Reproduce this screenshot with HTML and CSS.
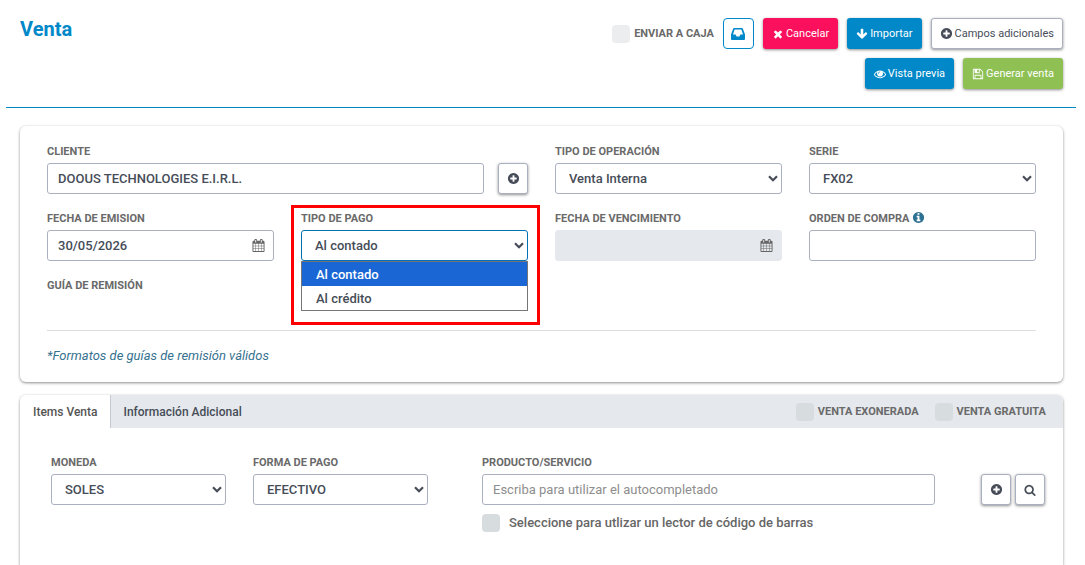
FILE: index.html
```html
<!DOCTYPE html>
<html lang="es">
<head>
<meta charset="utf-8">
<meta name="viewport" content="width=device-width, initial-scale=1">
<title>Venta</title>
<link rel="stylesheet" href="styles.css">
</head>
<body>
<svg class="sprite" aria-hidden="true">
  <symbol id="times" viewBox="0 0 1792 1792"><path d="M1490 1322q0 40-28 68l-136 136q-28 28-68 28t-68-28l-294-294-294 294q-28 28-68 28t-68-28l-136-136q-28-28-28-68t28-68l294-294-294-294q-28-28-28-68t28-68l136-136q28-28 68-28t68 28l294 294 294-294q28-28 68-28t68 28l136 136q28 28 28 68t-28 68l-294 294 294 294q28 28 28 68z"/></symbol>
  <symbol id="arrow-down" viewBox="0 0 1792 1792"><path d="M1675 832q0 53-37 90l-651 652q-39 37-91 37-53 0-90-37l-651-652q-38-36-38-90 0-53 38-91l74-75q39-37 91-37 53 0 90 37l294 294v-704q0-52 38-90t90-38h128q52 0 90 38t38 90v704l294-294q37-37 90-37 52 0 91 37l75 75q37 39 37 91z"/></symbol>
  <symbol id="plus-circle" viewBox="0 0 1792 1792"><path d="M1344 960v-128q0-26-19-45t-45-19h-256v-256q0-26-19-45t-45-19h-128q-26 0-45 19t-19 45v256h-256q-26 0-45 19t-19 45v128q0 26 19 45t45 19h256v256q0 26 19 45t45 19h128q26 0 45-19t19-45v-256h256q26 0 45-19t19-45zm320-64q0 209-103 385.5t-279.5 279.5-385.5 103-385.5-103-279.5-279.5-103-385.5 103-385.5 279.5-279.5 385.5-103 385.5 103 279.5 279.5 103 385.5z"/></symbol>
  <symbol id="info-circle" viewBox="0 0 1792 1792"><path d="M1152 1376v-160q0-14-9-23t-23-9h-96v-512q0-14-9-23t-23-9h-320q-14 0-23 9t-9 23v160q0 14 9 23t23 9h96v320h-96q-14 0-23 9t-9 23v160q0 14 9 23t23 9h448q14 0 23-9t9-23zm-128-896v-160q0-14-9-23t-23-9h-192q-14 0-23 9t-9 23v160q0 14 9 23t23 9h192q14 0 23-9t9-23zm640 416q0 209-103 385.5t-279.5 279.5-385.5 103-385.5-103-279.5-279.5-103-385.5 103-385.5 279.5-279.5 385.5-103 385.5 103 279.5 279.5 103 385.5z"/></symbol>
  <symbol id="eye" viewBox="0 0 1792 1792"><path d="M1664 960q-152-236-381-353 61 104 61 225 0 185-131.5 316.5t-316.5 131.5-316.5-131.5-131.5-316.5q0-121 61-225-229 117-381 353 133 205 333.5 326.5t434.5 121.5 434.5-121.5 333.5-326.5zm-720-384q0-20-14-34t-34-14q-125 0-214.5 89.5t-89.5 214.5q0 20 14 34t34 14 34-14 14-34q0-86 61-147t147-61q20 0 34-14t14-34zm848 384q0 34-20 69-140 230-376.5 368.5t-499.5 138.5-499.5-139-376.5-368q-20-35-20-69t20-69q140-229 376.5-368t499.5-139 499.5 139 376.5 368q20 35 20 69z"/></symbol>
  <symbol id="floppy" viewBox="0 0 1792 1792"><path d="M512 1536h768v-384h-768v384zm896 0h128v-896q0-14-10-38.5t-20-34.5l-281-281q-10-10-34-20t-39-10v416q0 40-28 68t-68 28h-576q-40 0-68-28t-28-68v-416h-128v1280h128v-416q0-40 28-68t68-28h832q40 0 68 28t28 68v416zm-384-928v-320q0-13-9.5-22.5t-22.5-9.5h-192q-13 0-22.5 9.5t-9.5 22.5v320q0 13 9.5 22.5t22.5 9.5h192q13 0 22.5-9.5t9.5-22.5zm640 32v928q0 40-28 68t-68 28h-1344q-40 0-68-28t-28-68v-1344q0-40 28-68t68-28h928q40 0 88 20t76 48l280 280q28 28 48 76t20 88z"/></symbol>
  <symbol id="calendar" viewBox="0 0 1792 1792"><path d="M192 1664h288v-288h-288v288zm352 0h320v-288h-320v288zm-352-352h288v-320h-288v320zm352 0h320v-320h-320v320zm-352-384h288v-288h-288v288zm736 736h320v-288h-320v288zm-384-736h320v-288h-320v288zm768 736h288v-288h-288v288zm-384-352h320v-320h-320v320zm-352-864v-288q0-13-9.5-22.5t-22.5-9.5h-64q-13 0-22.5 9.5t-9.5 22.5v288q0 13 9.5 22.5t22.5 9.5h64q13 0 22.5-9.5t9.5-22.5zm736 864h288v-320h-288v320zm-384-384h320v-288h-320v288zm384 0h288v-288h-288v288zm32-480v-288q0-13-9.5-22.5t-22.5-9.5h-64q-13 0-22.5 9.5t-9.5 22.5v288q0 13 9.5 22.5t22.5 9.5h64q13 0 22.5-9.5t9.5-22.5zm384-64v1280q0 52-38 90t-90 38h-1408q-52 0-90-38t-38-90v-1280q0-52 38-90t90-38h128v-96q0-66 47-113t113-47h64q66 0 113 47t47 113v96h384v-96q0-66 47-113t113-47h64q66 0 113 47t47 113v96h128q52 0 90 38t38 90z"/></symbol>
  <symbol id="search" viewBox="0 0 1792 1792"><path d="M1216 832q0-185-131.5-316.5t-316.5-131.5-316.5 131.5-131.5 316.5 131.5 316.5 316.5 131.5 316.5-131.5 131.5-316.5zm512 832q0 52-38 90t-90 38q-54 0-90-38l-343-342q-179 124-399 124-143 0-273.5-55.5t-225-150-150-225-55.5-273.5 55.5-273.5 150-225 225-150 273.5-55.5 273.5 55.5 225 150 150 225 55.5 273.5q0 220-124 399l343 343q37 37 37 90z"/></symbol>
  <symbol id="tray" viewBox="0 0 14 12"><path fill-rule="evenodd" d="M3.2 0h7.6q.8 0 1.1.8L14 6.6V11q0 1-1 1H1q-1 0-1-1V6.600L2.100.8Q2.400 0 3.200 0zM3.600 1.600L2 6.400h2.600l1 2h2.800l1-2H12L10.400 1.600z"/></symbol>
  <symbol id="chevron" viewBox="0 0 10 7"><path d="M1 1.200l4 4 4-4" fill="none" stroke="currentColor" stroke-width="2.200"/></symbol>
</svg>

<header class="page-header">
  <h1 class="page-title">Venta</h1>
  <div class="actions">
    <label class="check check-faint"><input type="checkbox"><span class="caption">ENVIAR A CAJA</span></label>
    <button type="button" class="btn btn-outline" aria-label="Bandeja"><svg class="icon-tray"><use href="#tray"/></svg></button>
    <button type="button" class="btn btn-danger"><svg class="icon"><use href="#times"/></svg>Cancelar</button>
    <button type="button" class="btn btn-primary"><svg class="icon"><use href="#arrow-down"/></svg>Importar</button>
    <button type="button" class="btn btn-light"><svg class="icon icon-md"><use href="#plus-circle"/></svg>Campos adicionales</button>
    <button type="button" class="btn btn-primary"><svg class="icon"><use href="#eye"/></svg>Vista previa</button>
    <button type="button" class="btn btn-success"><svg class="icon"><use href="#floppy"/></svg>Generar venta</button>
  </div>
</header>

<main class="content">
  <section class="card sale">
    <div class="sale-grid">
      <div class="field wide">
        <label class="caption" for="cliente">CLIENTE</label>
        <div class="with-button">
          <input class="control" id="cliente" type="text" value="DOOUS TECHNOLOGIES E.I.R.L.">
          <button type="button" class="btn btn-light btn-square" aria-label="Agregar cliente"><svg class="icon icon-md"><use href="#plus-circle"/></svg></button>
        </div>
      </div>
      <div class="field">
        <label class="caption" for="operacion">TIPO DE OPERACIÓN</label>
        <div class="slot">
          <select class="control" id="operacion"><option>Venta Interna</option></select>
          <svg class="chevron"><use href="#chevron"/></svg>
        </div>
      </div>
      <div class="field">
        <label class="caption" for="serie">SERIE</label>
        <div class="slot">
          <select class="control" id="serie"><option>FX02</option></select>
          <svg class="chevron"><use href="#chevron"/></svg>
        </div>
      </div>
      <div class="field">
        <label class="caption" for="emision">FECHA DE EMISION</label>
        <div class="slot">
          <input class="control" id="emision" type="text" value="30/05/2026">
          <svg class="calendar"><use href="#calendar"/></svg>
        </div>
      </div>
      <div class="field highlighted">
        <label class="caption" for="pago">TIPO DE PAGO</label>
        <div class="slot">
          <select class="control active" id="pago"><option>Al contado</option><option>Al crédito</option></select>
          <svg class="chevron"><use href="#chevron"/></svg>
          <ul class="options" role="listbox" aria-label="Tipo de pago">
            <li class="option selected" role="option" aria-selected="true">Al contado</li>
            <li class="option" role="option" aria-selected="false">Al crédito</li>
          </ul>
        </div>
      </div>
      <div class="field">
        <label class="caption" for="vencimiento">FECHA DE VENCIMIENTO</label>
        <div class="slot">
          <input class="control" id="vencimiento" type="text" disabled>
          <svg class="calendar"><use href="#calendar"/></svg>
        </div>
      </div>
      <div class="field">
        <label class="caption" for="orden">ORDEN DE COMPRA <svg class="info"><use href="#info-circle"/></svg></label>
        <input class="control" id="orden" type="text">
      </div>
      <div class="caption">GUÍA DE REMISIÓN</div>
    </div>
    <hr class="divider">
    <a class="formats" href="#">*Formatos de guías de remisión válidos</a>
  </section>

  <section class="card items">
    <div class="tabs">
      <div class="tab-list" role="tablist">
        <button type="button" class="tab current" role="tab" aria-selected="true">Items Venta</button>
        <button type="button" class="tab" role="tab" aria-selected="false">Información Adicional</button>
      </div>
      <div class="tab-checks">
        <label class="check"><input type="checkbox"><span class="caption">VENTA EXONERADA</span></label>
        <label class="check"><input type="checkbox"><span class="caption">VENTA GRATUITA</span></label>
      </div>
    </div>
    <div class="items-grid">
      <div class="field">
        <label class="caption" for="moneda">MONEDA</label>
        <div class="slot">
          <select class="control" id="moneda"><option>SOLES</option></select>
          <svg class="chevron"><use href="#chevron"/></svg>
        </div>
      </div>
      <div class="field">
        <label class="caption" for="forma">FORMA DE PAGO</label>
        <div class="slot">
          <select class="control" id="forma"><option>EFECTIVO</option></select>
          <svg class="chevron"><use href="#chevron"/></svg>
        </div>
      </div>
      <div class="field product">
        <label class="caption" for="producto">PRODUCTO/SERVICIO</label>
        <input class="control" id="producto" type="text" placeholder="Escriba para utilizar el autocompletado">
        <label class="check scanner"><input type="checkbox"><span>Seleccione para utlizar un lector de código de barras</span></label>
      </div>
      <div class="tools">
        <button type="button" class="btn btn-light btn-square" aria-label="Agregar producto"><svg class="icon icon-md"><use href="#plus-circle"/></svg></button>
        <button type="button" class="btn btn-light btn-square" aria-label="Buscar producto"><svg class="icon"><use href="#search"/></svg></button>
      </div>
    </div>
  </section>
</main>
</body>
</html>
```

FILE: styles.css
```css
* {
  box-sizing: border-box;
}

body {
  margin: 0;
  min-height: 100vh;
  display: flex;
  flex-direction: column;
  background: #fff;
  color: #464d58;
  font: 500 13px/16px Roboto, "Liberation Sans", sans-serif;
}

button,
input,
select {
  margin: 0;
  font: inherit;
  color: inherit;
}

.sprite {
  position: absolute;
  width: 0;
  height: 0;
}

svg {
  flex: none;
  fill: currentColor;
}

/* Header */
.page-header {
  display: flex;
  justify-content: space-between;
  align-items: flex-start;
  margin: 0 9px 0 6px;
  padding: 18px 13px 18px 14px;
  border-bottom: 1px solid #0088c0;
}

.page-title {
  margin: 0;
  color: #0088c8;
  font-size: 20px;
  line-height: 23px;
  font-weight: 700;
}

.actions {
  display: flex;
  flex-wrap: wrap;
  justify-content: flex-end;
  gap: 9px;
  max-width: 480px;
}

.btn {
  display: flex;
  align-items: center;
  justify-content: center;
  gap: 2px;
  height: 31px;
  padding: 0 8px;
  border: 1px solid transparent;
  border-radius: 3px;
  font-size: 11px;
  font-weight: 400;
  white-space: nowrap;
  color: #fff;
  box-shadow: 0 1px 3px rgba(0, 0, 0, .45);
}

.btn-primary {
  background: #0088c8;
}

.btn-danger {
  background: #fa105c;
}

.btn-success {
  background: #8ec054;
}

.btn-light {
  background: #fff;
  border-color: #a9b1c0;
  color: #464d58;
}

.btn-outline {
  width: 31px;
  padding: 0;
  background: #fff;
  border-color: #0088c8;
  border-radius: 4px;
  color: #0088c8;
  box-shadow: none;
}

.btn-square {
  flex: none;
  width: 30px;
  padding: 0;
}

.icon {
  width: 12px;
  height: 12px;
}

.icon-md {
  width: 13px;
  height: 13px;
}

.icon-tray {
  width: 14px;
  height: 12px;
}

/* Labels and check boxes */
.caption {
  color: #6a6a6a;
  font-size: 11px;
  line-height: 16px;
  font-weight: 700;
  white-space: nowrap;
}

.check {
  display: flex;
  align-items: center;
  gap: 4px;
}

.check input {
  appearance: none;
  flex: none;
  width: 18px;
  height: 18px;
  border-radius: 4px;
  background: #d7dcdf;
}

.check-faint input {
  background: #ebedef;
}

/* Cards */
.content {
  flex: 1;
  display: flex;
  flex-direction: column;
  gap: 13px;
  padding: 18px 22px 0 20px;
}

.card {
  background: #fff;
  border-radius: 6px;
  box-shadow: 0 1px 3px rgba(0, 0, 0, .45);
}

.sale {
  padding: 18px 27px;
}

.sale-grid {
  display: grid;
  grid-template-columns: repeat(4, minmax(0, 1fr));
  gap: 17px 27px;
}

.field {
  display: flex;
  flex-direction: column;
  gap: 3px;
  min-width: 0;
}

.wide {
  grid-column: span 2;
}

.with-button {
  display: flex;
  gap: 14px;
}

.slot {
  position: relative;
}

.control {
  width: 100%;
  height: 31px;
  padding: 0 10px;
  border: 1px solid #a9b1c0;
  border-radius: 3px;
  background: #fff;
  outline: 0;
}

.control:disabled {
  background: #e5e8ec;
  border-color: #e5e8ec;
}

.control::placeholder {
  color: #8e8e8e;
  font-weight: 400;
}

select.control {
  appearance: none;
  padding: 0 13px;
}

.active {
  border-color: #0072b4;
}

.chevron {
  position: absolute;
  right: 4px;
  top: 12px;
  width: 10px;
  height: 7px;
  pointer-events: none;
}

.calendar {
  position: absolute;
  right: 9px;
  top: 9px;
  width: 13px;
  height: 13px;
  color: #666;
}

.info {
  width: 13px;
  height: 13px;
  vertical-align: -2px;
  color: #2d7092;
}

.highlighted {
  position: relative;
}

.highlighted::after {
  content: "";
  position: absolute;
  inset: -6px -12px -64px -10px;
  border: 3px solid #f00;
  pointer-events: none;
}

.options {
  position: absolute;
  top: 100%;
  left: 0;
  right: 0;
  margin: 0;
  padding: 0;
  list-style: none;
  background: #fff;
  border: 1px solid #767676;
}

.option {
  padding: 5px 14px 3px;
}

.selected {
  background: #1a66d4;
  color: #fff;
}

.divider {
  margin: 36px 0 17px;
  border: 0;
  border-top: 1px solid #ddd;
}

.formats {
  display: block;
  color: #36718f;
  font-style: italic;
  font-weight: 400;
  text-decoration: none;
}

/* Items */
.items {
  flex: 1;
  border-radius: 6px 6px 0 0;
}

.tabs {
  display: flex;
  justify-content: space-between;
  height: 33px;
  padding-right: 17px;
  border-radius: 6px 6px 0 0;
  background: #e5e8ec;
  overflow: hidden;
}

.tab-list,
.tab-checks {
  display: flex;
}

.tab-checks {
  gap: 16px;
}

.tab {
  padding: 0 13px;
  border: 0;
  background: none;
  font-size: 12px;
}

.current {
  padding: 0 12px 0 13px;
  border-right: 1px solid #c5c9d0;
  background: #fff;
  color: #555;
}

.items-grid {
  display: grid;
  grid-template-columns: 175fr 175fr 480fr 83px;
  gap: 27px;
  padding: 27px 18px 24px 31px;
}

.product {
  padding-left: 27px;
}

.scanner {
  gap: 9px;
  margin-top: 6px;
  color: #666;
}

.tools {
  display: flex;
  justify-content: flex-end;
  gap: 4px;
  padding-top: 19px;
}
```
